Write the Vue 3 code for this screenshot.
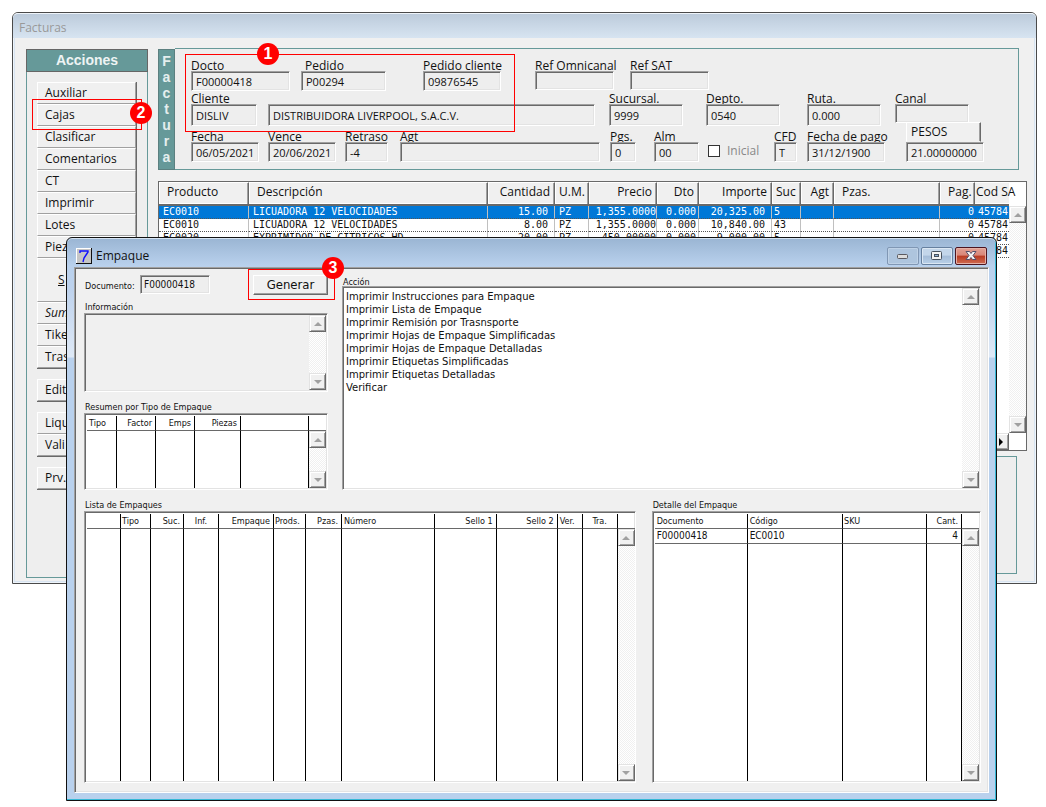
<script setup>
const actionGroups = [
  ['Auxiliar', 'Cajas', 'Clasificar', 'Comentarios', 'CT', 'Imprimir', 'Lotes', 'Piez', 'S', 'Sum', 'Tike', 'Tras'],
  ['Edit'],
  ['Liqu', 'Vali'],
  ['Prv.'],
]

const row1 = [
  { id: 'docto', label: 'Docto', value: 'F00000418' },
  { id: 'pedido', label: 'Pedido', value: 'P00294' },
  { id: 'pedcli', label: 'Pedido cliente', value: '09876545' },
  { id: 'omni', label: 'Ref Omnicanal', value: '' },
  { id: 'refsat', label: 'Ref SAT', value: '' },
]
const row2 = [
  { id: 'cliente', label: 'Cliente', value: 'DISLIV' },
  { id: 'nombre', label: '', value: 'DISTRIBUIDORA LIVERPOOL, S.A.C.V.' },
  { id: 'sucursal', label: 'Sucursal.', value: '9999' },
  { id: 'depto', label: 'Depto.', value: '0540' },
  { id: 'ruta', label: 'Ruta.', value: '0.000' },
  { id: 'canal', label: 'Canal', value: '' },
]
const row3 = [
  { id: 'fecha', label: 'Fecha', value: '06/05/2021' },
  { id: 'vence', label: 'Vence', value: '20/06/2021' },
  { id: 'retraso', label: 'Retraso', value: '-4' },
  { id: 'agt', label: 'Agt', value: '' },
  { id: 'pgs', label: 'Pgs.', value: '0' },
  { id: 'alm', label: 'Alm', value: '00' },
]
const row3b = [
  { id: 'cfd', label: 'CFD', value: 'T' },
  { id: 'pago', label: 'Fecha de pago', value: '31/12/1900' },
]

const productCols = [
  { t: 'Producto', c: 'c-prod' },
  { t: 'Descripción', c: 'c-desc' },
  { t: 'Cantidad', c: 'c-cant r' },
  { t: 'U.M.', c: 'c-um' },
  { t: 'Precio', c: 'c-precio r' },
  { t: 'Dto', c: 'c-dto r' },
  { t: 'Importe', c: 'c-imp r' },
  { t: 'Suc', c: 'c-suc' },
  { t: 'Agt', c: 'c-agt r' },
  { t: 'Pzas.', c: 'c-pzas' },
  { t: 'Pag.', c: 'c-pag r' },
  { t: 'Cod SA', c: 'c-cod' },
]
const products = [
  ['EC0010', 'LICUADORA 12 VELOCIDADES', '15.00', 'PZ', '1,355.0000', '0.000', '20,325.00', '5', '', '', '0', '45784'],
  ['EC0010', 'LICUADORA 12 VELOCIDADES', '8.00', 'PZ', '1,355.0000', '0.000', '10,840.00', '43', '', '', '0', '45784'],
  ['EC0020', 'EXPRIMIDOR DE CITRICOS HD', '20.00', 'PZ', '450.00000', '0.000', '9,000.00', '5', '', '', '0', '45784'],
  ['', '', '', '', '', '', '', '', '', '', '', '45784'],
]

const printActions = [
  'Imprimir Instrucciones para Empaque',
  'Imprimir Lista de Empaque',
  'Imprimir Remisión por Trasnsporte',
  'Imprimir Hojas de Empaque Simplificadas',
  'Imprimir Hojas de Empaque Detalladas',
  'Imprimir Etiquetas Simplificadas',
  'Imprimir Etiquetas Detalladas',
  'Verificar',
]

const packCols = [
  { t: '', c: 'p0' },
  { t: 'Tipo', c: 'p1' },
  { t: 'Suc.', c: 'p2 r' },
  { t: 'Inf.', c: 'p3 m' },
  { t: 'Empaque', c: 'p4 r' },
  { t: 'Prods.', c: 'p5' },
  { t: 'Pzas.', c: 'p6 r' },
  { t: 'Número', c: 'p7' },
  { t: 'Sello 1', c: 'p8 r' },
  { t: 'Sello 2', c: 'p9 r' },
  { t: 'Ver.', c: 'p10' },
  { t: 'Tra.', c: 'p11 m' },
]
</script>

<template>
  <main class="desktop">
    <section class="win facturas">
      <header class="title inactive">Facturas</header>
      <div class="fact-body">
        <aside class="side">
          <h2>Acciones</h2>
          <nav>
            <div v-for="(g, i) in actionGroups" :key="i" class="group">
              <div v-for="a in g" :key="a" class="action" :class="{ tall: a === 'S', italic: a === 'Sum' }">
                <button type="button"><u v-if="a === 'S'">S</u><template v-else>{{ a }}</template></button>
                <div v-if="a === 'Cajas'" class="mark mark2"><span class="dot">2</span></div>
              </div>
            </div>
          </nav>
        </aside>

        <div class="main">
          <section class="factura">
            <h2 class="strip"><span v-for="(l, i) in 'Factura'" :key="i">{{ l }}</span></h2>
            <form class="form" @submit.prevent>
              <div class="frow one">
                <div v-for="f in row1" :key="f.id" class="field" :class="f.id">
                  <label :for="f.id">{{ f.label }}</label>
                  <input :id="f.id" type="text" :value="f.value" />
                </div>
              </div>
              <div class="frow two">
                <div v-for="f in row2" :key="f.id" class="field" :class="f.id">
                  <label :for="f.id">{{ f.label }}</label>
                  <input :id="f.id" type="text" :value="f.value" :aria-label="f.label || 'Nombre'" />
                </div>
              </div>
              <div class="frow three">
                <div v-for="f in row3" :key="f.id" class="field" :class="f.id">
                  <label :for="f.id">{{ f.label }}</label>
                  <input :id="f.id" type="text" :value="f.value" />
                </div>
                <label class="check"><input type="checkbox" /><span>Inicial</span></label>
                <div v-for="f in row3b" :key="f.id" class="field" :class="f.id">
                  <label :for="f.id">{{ f.label }}</label>
                  <input :id="f.id" type="text" :value="f.value" />
                </div>
                <div class="field moneda">
                  <button type="button">PESOS</button>
                  <input type="text" value="21.00000000" aria-label="Tipo de cambio" />
                </div>
              </div>
              <div class="mark mark1"><span class="dot">1</span></div>
            </form>
          </section>

          <section class="products">
            <div class="ptable">
              <table>
                <thead>
                  <tr><th v-for="c in productCols" :key="c.t" :class="c.c">{{ c.t }}</th></tr>
                </thead>
                <tbody>
                  <tr v-for="(r, i) in products" :key="i" :class="{ sel: i === 0 }">
                    <td v-for="(v, j) in r" :key="j" :class="productCols[j].c">{{ v }}</td>
                  </tr>
                </tbody>
              </table>
              <div class="hscroll"><button type="button" class="sb right" aria-label="Derecha"></button></div>
            </div>
            <div class="pscroll">
              <div class="scroll">
                <button type="button" class="sb up" aria-label="Subir"></button>
                <button type="button" class="sb down" aria-label="Bajar"></button>
              </div>
            </div>
          </section>

          <section class="totals"></section>
        </div>
      </div>
    </section>

    <section class="win empaque">
      <header class="title active">
        <svg class="logo" width="16" height="16" viewBox="0 0 16 16">
          <rect width="16" height="16" fill="#111" />
          <path d="M0 0H15V1H1V15H0Z" fill="#fff" />
          <rect x="1" y="1" width="14" height="14" fill="#c6c6c6" />
          <path d="M4 5V3H12V4L10 7L8 10L7 14" fill="none" stroke="#1010ff" stroke-width="1.4" />
        </svg>
        <h1>Empaque</h1>
        <div class="wbtns">
          <button type="button" class="min" aria-label="Minimizar">
            <svg width="30" height="16" viewBox="0 0 30 16"><rect x="9.500" y="6.500" width="10" height="4" rx="1" fill="#dcdcdc" stroke="#5a5a60" /></svg>
          </button>
          <button type="button" class="max" aria-label="Maximizar">
            <svg width="30" height="16" viewBox="0 0 30 16"><rect x="9.500" y="3.500" width="10" height="8" rx="1" fill="#f2f2f2" stroke="#48525e" /><rect x="12.500" y="6.500" width="4" height="2" fill="#8fb0d4" stroke="#48525e" /></svg>
          </button>
          <button type="button" class="close" aria-label="Cerrar">
            <svg width="30" height="16" viewBox="0 0 30 16"><path d="M10 3.500H13.500L15 5.500L16.500 3.500H20L17 7.500L20 11.500H16.500L15 9.500L13.500 11.500H10L13 7.500Z" fill="#f4f4f4" stroke="#56506a" stroke-linejoin="round" /></svg>
          </button>
        </div>
      </header>

      <div class="client">
        <div class="upper">
          <div class="left">
            <div class="docline">
              <label for="doc">Documento:</label>
              <input id="doc" type="text" value="F00000418" />
              <div class="gen">
                <button type="button">Generar</button>
                <div class="mark mark3"><span class="dot">3</span></div>
              </div>
            </div>
            <label class="cap" for="info">Información</label>
            <div class="inset info">
              <textarea id="info"></textarea>
              <div class="scroll">
                <button type="button" class="sb up" aria-label="Subir"></button>
                <button type="button" class="sb down" aria-label="Bajar"></button>
              </div>
            </div>
            <h3 class="cap capres">Resumen por Tipo de Empaque</h3>
            <div class="inset resumen">
              <table class="grid">
                <thead><tr><th class="s0">Tipo</th><th class="s1 r">Factor</th><th class="s2 r">Emps</th><th class="s3 r">Piezas</th><th></th></tr></thead>
                <tbody><tr class="fill"><td></td><td></td><td></td><td></td><td></td></tr></tbody>
              </table>
              <div class="gscroll">
                <div class="scroll">
                  <button type="button" class="sb up" aria-label="Subir"></button>
                  <button type="button" class="sb down" aria-label="Bajar"></button>
                </div>
              </div>
            </div>
          </div>
          <div class="right-col">
            <h3 class="cap">Acción</h3>
            <div class="inset acts">
              <ul><li v-for="a in printActions" :key="a">{{ a }}</li></ul>
              <div class="scroll">
                <button type="button" class="sb up" aria-label="Subir"></button>
                <button type="button" class="sb down" aria-label="Bajar"></button>
              </div>
            </div>
          </div>
        </div>

        <div class="lower">
          <div class="packs">
            <h3 class="cap">Lista de Empaques</h3>
            <div class="inset biglist">
              <table class="grid">
                <thead><tr><th v-for="c in packCols" :key="c.c" :class="c.c">{{ c.t }}</th></tr></thead>
                <tbody><tr class="fill"><td v-for="c in packCols" :key="c.c"></td></tr></tbody>
              </table>
              <div class="gscroll">
                <div class="scroll">
                  <button type="button" class="sb up" aria-label="Subir"></button>
                  <button type="button" class="sb down" aria-label="Bajar"></button>
                </div>
              </div>
            </div>
          </div>
          <div class="detail">
            <h3 class="cap">Detalle del Empaque</h3>
            <div class="inset biglist">
              <table class="grid">
                <thead><tr><th class="d0">Documento</th><th class="d1">Código</th><th class="d2">SKU</th><th class="d3 r">Cant.</th></tr></thead>
                <tbody>
                  <tr class="data"><td>F00000418</td><td>EC0010</td><td></td><td class="r">4</td></tr>
                  <tr class="fill"><td></td><td></td><td></td><td></td></tr>
                </tbody>
              </table>
              <div class="gscroll">
                <div class="scroll">
                  <button type="button" class="sb up" aria-label="Subir"></button>
                  <button type="button" class="sb down" aria-label="Bajar"></button>
                </div>
              </div>
            </div>
          </div>
        </div>
      </div>
    </section>
  </main>
</template>

<style>
body {
  background: #fff;
}
</style>

<style scoped>
* {
  box-sizing: border-box;
}
.desktop {
  position: relative;
  min-height: 100vh;
  padding: 12px 9px 6px 12px;
  font: 12px/14px "Open Sans", "Noto Sans", sans-serif;
  color: #111;
}
h1, h2, h3, ul {
  margin: 0;
  padding: 0;
  font-size: inherit;
  font-weight: normal;
  list-style: none;
}
button, input, textarea {
  font: inherit;
  color: inherit;
  margin: 0;
  padding: 0;
  border-radius: 0;
  outline: 0;
}

/* windows */
.facturas {
  border: 1px solid #4a4a4a;
  border-radius: 6px 6px 0 0;
  background: #f0f0f0;
  box-shadow: inset 0 0 0 1px #eef4fa, inset 0 0 0 2px #d8e4f1;
}
.title {
  display: flex;
  align-items: center;
}
.inactive {
  height: 25px;
  padding: 3px 6px 0;
  border-top: 1px solid #eef4fa;
  border-radius: 5px 5px 0 0;
  background: linear-gradient(#bccbdb, #d7e4f1);
  color: #999;
}
.fact-body {
  display: grid;
  grid-template-columns: 122px minmax(0, 1fr);
  gap: 10px;
  padding: 10px 9px 5px 13px;
}

/* sidebar */
.side {
  margin-top: 1px;
  border: 1px solid #669999;
  background: #eee;
}
.side h2 {
  height: 23px;
  margin: -1px;
  border: 1px solid #666;
  background: #669999;
  color: #eef4f4;
  font: bold 14px/21px "Liberation Sans", Arial, sans-serif;
  text-align: center;
}
.side nav {
  display: grid;
  gap: 10px;
  padding: 11px 10px 0;
}
.group {
  border-right: 1px solid #696969;
  border-bottom: 1px solid #696969;
}
.action {
  position: relative;
  height: 22px;
}
.action button {
  display: block;
  width: 100%;
  height: 100%;
  padding: 0 7px;
  border: 1px solid;
  border-color: #fff #a0a0a0 #a0a0a0 #fff;
  background: #f0f0f0;
  text-align: left;
}
.group .tall {
  height: 44px;
}
.tall button {
  padding-left: 20px;
}
.italic {
  font-style: italic;
}

/* numbered callouts */
.mark {
  position: absolute;
  z-index: 3;
  border: 1px solid #f00;
  pointer-events: none;
}
.dot {
  position: absolute;
  width: 22px;
  height: 22px;
  border-radius: 50%;
  background: #f00;
  color: #fff;
  font: bold 16px/22px "Liberation Sans", Arial, sans-serif;
  text-align: center;
}
.mark1 {
  left: 10px;
  top: 5px;
  width: 330px;
  height: 78px;
}
.mark1 .dot {
  left: 71px;
  top: -12px;
}
.mark2 {
  inset: -5px -6px -4px -5px;
}
.mark2 .dot {
  right: -11px;
  top: 2px;
}
.mark3 {
  inset: -6px -7px -5px -5px;
}
.mark3 .dot {
  right: -10px;
  top: -13px;
}

/* invoice header */
.factura {
  display: flex;
  margin-right: 8px;
}
.strip {
  display: flex;
  flex-direction: column;
  width: 17px;
  margin-top: 1px;
  padding-top: 3px;
  border: 1px solid #5c8080;
  background: #669999;
  color: #e4eeee;
  font: bold 14px/16px "Liberation Sans", Arial, sans-serif;
  text-align: center;
}
.form {
  position: relative;
  flex: 1;
  min-width: 0;
  padding: 10px 0 7px 16px;
  border: 1px solid #669999;
  border-left: 0;
  background: #eee;
}
.frow {
  display: flex;
  align-items: flex-start;
}
.two {
  margin-top: 1px;
  padding-right: 49px;
}
.three {
  margin-top: 4px;
  padding-right: 34px;
}
.field label {
  display: block;
  height: 12px;
  white-space: nowrap;
}
input[type="text"] {
  display: block;
  position: relative;
  width: 100%;
  height: 20px;
  padding: 0 4px;
  border: 1px solid;
  border-color: #a0a0a0 #fff #fff #a0a0a0;
  background: #eee;
  box-shadow: inset 1px 1px 0 #696969, inset -1px -1px 0 #e3e3e3;
  font-size: 11px;
}
.two input[type="text"] {
  height: 22px;
}
.docto { width: 99px; margin-right: 11px; }
.pedido { width: 85px; margin-right: 37px; }
.pedido label { padding-left: 4px; }
.pedcli { width: 78px; margin-right: 34px; }
.omni { width: 79px; margin-right: 16px; }
.refsat { width: 79px; }
.one .omni input, .one .refsat input { height: 19px; }
.cliente { width: 66px; margin-right: 11px; }
.nombre { flex: 1; min-width: 0; margin-right: 14px; }
.sucursal { width: 74px; margin-right: 23px; }
.depto { width: 74px; margin-right: 27px; }
.ruta { width: 74px; margin-right: 14px; }
.canal { width: 74px; }
.two .canal input { height: 19px; }
.fecha { width: 68px; margin-right: 9px; }
.vence { width: 68px; margin-right: 9px; }
.retraso { width: 43px; margin-right: 12px; }
.agt { flex: 1; min-width: 0; margin-right: 10px; }
.pgs { width: 26px; margin-right: 18px; }
.alm { width: 45px; margin-right: 9px; }
.check {
  display: flex;
  align-items: center;
  gap: 7px;
  width: 57px;
  height: 20px;
  margin: 11px 9px 0 0;
  color: #888;
}
.check input {
  appearance: none;
  width: 12px;
  height: 12px;
  border: 1px solid #333;
  background: #fff;
}
.cfd { width: 23px; margin-right: 10px; }
.pago { width: 78px; margin-right: 21px; }
.moneda {
  width: 78px;
  margin-top: -8px;
}
.moneda button {
  display: block;
  width: 75px;
  height: 20px;
  padding: 0 4px;
  border: 1px solid;
  border-color: #fff #696969 #f0f0f0 #fff;
  background: #f0f0f0;
  box-shadow: inset -1px 0 0 #a0a0a0;
  text-align: left;
}

/* product table */
.products {
  display: flex;
  height: 270px;
  margin-top: 11px;
  border: 1px solid #696969;
  background: #fff;
}
.ptable {
  display: flex;
  flex: 1;
  flex-direction: column;
  justify-content: space-between;
  min-width: 0;
}
table {
  width: 100%;
  border-collapse: separate;
  border-spacing: 0;
  table-layout: fixed;
}
th, td {
  padding: 0 5px;
  overflow: hidden;
  font-weight: normal;
  text-align: left;
  white-space: nowrap;
}
.r {
  text-align: right;
}
.m {
  text-align: center;
}
.ptable th {
  height: 24px;
  padding: 0 4px 3px 8px;
  border: solid;
  border-width: 1px 1px 2px 0;
  border-color: #fff #696969 #696969 #fff;
  background: linear-gradient(#f0f0f0, #f0f0f0) 0 0 / 100% 20px no-repeat;
  box-shadow: inset -1px 0 0 #a0a0a0, inset 1px 0 0 #fff;
}
.ptable td {
  height: 13px;
  padding: 0 4px;
  border-right: 1px solid #c0c0c0;
  border-bottom: 1px dotted #555;
  font: 10px/12px "DejaVu Sans Mono", "Liberation Mono", monospace;
}
.ptable .sel td {
  background: #0078d7;
  color: #fff;
}
.c-prod { width: 90px; }
.c-cant { width: 67px; }
.c-um { width: 34px; }
.c-precio { width: 68px; }
.c-dto { width: 42px; }
.c-imp { width: 73px; }
.c-suc { width: 29px; }
.c-agt { width: 33px; }
.c-pzas { width: 106px; }
.c-pag { width: 35px; }
.c-cod { width: 34px; }
.ptable th.c-um, .ptable th.c-suc { padding-left: 4px; }
.ptable th.c-cod {
  padding: 0 0 3px 1px;
  border-right: 0;
  overflow: visible;
  box-shadow: none;
}
.ptable td.c-cant, .ptable td.c-imp { padding-right: 6px; }
.ptable td.c-precio { padding-right: 0; text-overflow: clip; }
.ptable td.c-dto { padding-right: 2px; }
.ptable td.c-suc { padding-left: 2px; }
.ptable td.c-pag { padding: 0 1px 0 0; border-right: 0; }
.ptable td.c-cod { padding: 0 0 0 3px; border-right: 0; }
.hscroll {
  display: flex;
  justify-content: flex-end;
  height: 17px;
  background: #f0f0f0;
}
.pscroll {
  display: flex;
  width: 17px;
  padding: 24px 0 17px;
}
.totals {
  height: 118px;
  margin: 5px 10px 4px 0;
  border: 1px solid #669999;
  background: #eee;
}

/* scroll bars */
.scroll {
  display: flex;
  flex: none;
  flex-direction: column;
  justify-content: space-between;
  width: 17px;
  background: repeating-conic-gradient(#f0f0f0 0 25%, #fff 0 50%) 0 0 / 2px 2px;
}
.sb {
  display: grid;
  place-items: center;
  width: 17px;
  height: 17px;
  border: 1px solid;
  border-color: #e3e3e3 #696969 #696969 #e3e3e3;
  background: #f0f0f0;
  box-shadow: inset 1px 1px 0 #fff, inset -1px -1px 0 #a0a0a0;
}
.sb::before {
  content: "";
  border: 4px solid transparent;
}
.up::before {
  border-top-width: 0;
  border-bottom-color: #a0a0a0;
}
.down::before {
  border-bottom-width: 0;
  border-top-color: #a0a0a0;
}
.right::before {
  border-right-width: 0;
  border-left-color: #000;
}

/* packing window */
.empaque {
  position: absolute;
  z-index: 2;
  top: 237px;
  left: 66px;
  right: 49px;
  padding: 0 7px 7px;
  border: 1px solid #111;
  border-radius: 6px 6px 0 0;
  background: linear-gradient(#9ab5d3, #b9d1ed 28px, #bdd2ed 50px, #dfe9f6 119px, #b9d1ed 120px);
  box-shadow: inset 0 1px 0 #d5e3f2, inset -1px -1px 0 #36b8d6;
  font: 9px/12px "DejaVu Sans Condensed", "DejaVu Sans", sans-serif;
}
.active {
  gap: 4px;
  height: 29px;
  padding: 6px 2px 0;
}
.title h1 {
  flex: 1;
  font: 12px/16px "Open Sans", "Noto Sans", sans-serif;
}
.logo {
  flex: none;
}
.wbtns {
  display: flex;
  gap: 2px;
}
.wbtns button {
  display: grid;
  place-items: center;
  width: 32px;
  height: 18px;
  border: 1px solid #66809f;
  border-radius: 2px;
  background: linear-gradient(#c3d6ea 45%, #a4bcd8 50%, #b9d0e8);
  box-shadow: inset 0 0 0 1px #dbe7f3;
}
.wbtns .min {
  border-color: #8097b4;
  background: #aec5de;
  box-shadow: inset 0 0 0 1px #bfd2e7;
}
.wbtns .close {
  border-color: #4c1420;
  background: linear-gradient(#e0a094 0, #d98678 45%, #b83a22 50%, #cf6c52);
  box-shadow: inset 0 0 0 1px #e5b0a6;
}
.client {
  padding: 5px 7px 9px 9px;
  border: 1px solid;
  border-color: #a0a0a0 #fff #fff #a0a0a0;
  background: #f0f0f0;
  box-shadow: inset 1px 1px 0 #696969, inset -1px -1px 0 #e3e3e3;
}
.upper {
  display: grid;
  grid-template-columns: 244px minmax(0, 1fr);
  gap: 14px;
}
.docline {
  display: flex;
  align-items: center;
  height: 23px;
  padding-left: 1px;
}
.docline label {
  width: 55px;
  padding-top: 2px;
}
.docline input[type="text"] {
  width: 70px;
  height: 19px;
  padding-left: 3px;
  font-family: "DejaVu Sans Condensed", "DejaVu Sans", sans-serif;
  font-size: 10px;
}
.gen {
  position: relative;
  width: 75px;
  margin-left: auto;
}
.gen button {
  width: 100%;
  height: 20px;
  border: 1px solid;
  border-color: #fff #696969 #696969 #fff;
  background: #f0f0f0;
  box-shadow: inset -1px -1px 0 #a0a0a0;
  font-size: 13px;
  line-height: 16px;
}
.cap {
  display: block;
  padding-left: 1px;
}
.left > label.cap {
  padding-top: 5px;
}
.capres {
  padding-top: 9px;
}
.right-col {
  display: flex;
  flex-direction: column;
  padding-top: 2px;
}
.right-col .cap {
  height: 11px;
  line-height: 14px;
}
.inset {
  display: flex;
  border: 1px solid;
  border-color: #a0a0a0 #fff #fff #a0a0a0;
  background: #fff;
  box-shadow: inset 1px 1px 0 #696969, inset -1px -1px 0 #e3e3e3;
  padding: 2px 1px 1px 2px;
}
.info {
  height: 79px;
  padding-top: 1px;
  background: #f0f0f0;
}
.info textarea {
  flex: 1;
  min-width: 0;
  border: 0;
  background: transparent;
  resize: none;
}
.resumen {
  height: 77px;
}
.acts {
  flex: 1;
  padding-top: 1px;
}
.acts ul {
  flex: 1;
  padding: 2px 1px;
  font-family: "DejaVu Sans", sans-serif;
  font-size: 10px;
  line-height: 13px;
}
.grid {
  flex: 1;
  width: 0;
  min-width: 0;
  height: 100%;
}
.grid th, .grid td {
  padding: 0 2px;
  border-right: 1px solid #000;
}
.grid th {
  height: 15px;
  border-bottom: 1px solid #696969;
}
.grid .r {
  padding-right: 3px;
}
.grid .data td {
  height: 15px;
  border-bottom: 1px solid #696969;
  font-size: 10px;
}
.gscroll {
  display: flex;
  width: 17px;
  padding-top: 15px;
  background: linear-gradient(#696969, #696969) 0 14px / 100% 1px no-repeat;
}
.s0 { width: 30px; }
.s1 { width: 39px; }
.s2 { width: 39px; }
.s3 { width: 46px; }
.lower {
  display: grid;
  grid-template-columns: minmax(0, 551fr) minmax(0, 329fr);
  gap: 16px;
  padding-top: 9px;
}
.biglist {
  height: 272px;
}
.packs .biglist {
  padding-right: 0;
}
.p0 { width: 34px; }
.p1 { width: 30px; }
.p2 { width: 33px; }
.p3 { width: 35px; }
.p4 { width: 55px; }
.p5 { width: 32px; }
.p6 { width: 36px; }
.p8 { width: 62px; }
.p9 { width: 61px; }
.p10 { width: 25px; }
.p11 { width: 35px; }
.grid th.p5, .grid th.p1 { padding: 0 0 0 1px; }
.d0 { width: 93px; }
.d2 { width: 84px; }
.d3 { width: 35px; }
.grid th.d2 { padding-left: 1px; }
</style>
